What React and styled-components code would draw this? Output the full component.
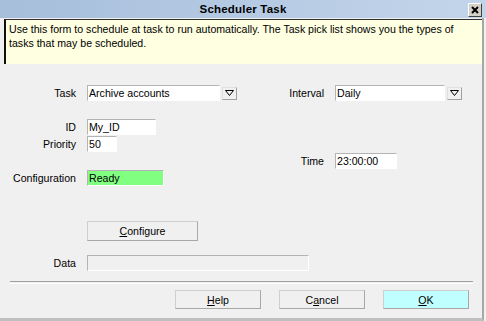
import React from "react";
import styled, { createGlobalStyle } from "styled-components";

const Global = createGlobalStyle`
  html, body {
    margin: 0;
    padding: 0;
    background: #f0f0f0;
  }
  body {
    font-family: "Liberation Sans", Arial, sans-serif;
    font-size: 10.6px;
    color: #000;
  }
`;

const Page = styled.div`
  width: 486px;
  height: 321px;
  display: flex;
  flex-direction: column;
  overflow: hidden;
`;

const TitleBar = styled.div`
  height: 18px;
  display: flex;
  align-items: center;
  justify-content: center;
  position: relative;
  background: linear-gradient(to right, #a6bedb, #c3d5ea);
  font-weight: bold;
  font-size: 11.5px;
  letter-spacing: 0.2px;
`;

const CloseBtn = styled.div`
  position: absolute;
  right: 4px;
  top: 3px;
  width: 12px;
  height: 12px;
  background: #d4d0c8;
  border: 1px solid;
  border-color: #fff #404040 #404040 #fff;
  display: flex;
  align-items: center;
  justify-content: center;
`;

const Frame = styled.div`
  width: 482px;
  height: 300px;
  border-right: 2px solid #a8a8a8;
  border-bottom: 3px solid #c0c0c0;
  display: flex;
  flex-direction: column;
`;

const Notice = styled.div`
  margin: 1px 0 0 4px;
  height: 45px;
  box-sizing: border-box;
  background: #ffffe1;
  border-top: 1px solid #303030;
  border-left: 2px solid #101010;
  padding: 2px 0 0 3px;
  line-height: 14px;
`;

const Columns = styled.div`
  display: flex;
  margin-top: 21px;
`;

const Col = styled.div`
  display: flex;
  flex-direction: column;
  width: ${(p) => p.$width}px;
`;

const Row = styled.div`
  display: flex;
  align-items: center;
  height: 16px;
  margin-top: ${(p) => p.$top || 0}px;
`;

const Label = styled.div`
  width: ${(p) => p.$width || 76}px;
  text-align: right;
  margin-right: 11px;
  flex-shrink: 0;
`;

const Field = styled.div`
  width: ${(p) => p.$width}px;
  height: 16px;
  box-sizing: border-box;
  background: ${(p) => p.$bg || "#fff"};
  border-top: 1px solid #b4b4b4;
  border-left: 1px solid #b4b4b4;
  border-bottom: 1px solid #fff;
  border-right: 1px solid #fff;
  padding-left: 1px;
  line-height: 14px;
  white-space: nowrap;
  overflow: hidden;
`;

const DropBtn = styled.div`
  width: 15px;
  height: 13px;
  box-sizing: border-box;
  margin-left: 2px;
  border: 1px solid;
  border-color: #e0e0e0 #a0a0a0 #a0a0a0 #e0e0e0;
  background: #f0f0f0;
  display: flex;
  align-items: center;
  justify-content: center;
`;

const Button = styled.div`
  width: ${(p) => p.$width}px;
  height: ${(p) => p.$height}px;
  box-sizing: border-box;
  border: 1px solid;
  border-color: #cfcfcf #a8a8a8 #a8a8a8 #cfcfcf;
  background: ${(p) => p.$bg || "#f0f0f0"};
  display: flex;
  align-items: center;
  justify-content: center;
`;

const ConfigRow = styled.div`
  margin: 35px 0 0 87px;
`;

const Separator = styled.div`
  margin: 10px 0 0 10px;
  width: 463px;
  height: 1px;
  border-top: 1px solid #a0a0a0;
  border-bottom: 1px solid #fff;
`;

const ButtonBar = styled.div`
  display: flex;
  gap: 18px;
  margin: 6px 0 0 175px;
`;

const Arrow = () => (
  <svg width="9" height="6" viewBox="0 0 9 6">
    <path d="M0.5 0.5 H8.5 L4.5 5.5 Z" fill="none" stroke="#000" strokeWidth="1" />
  </svg>
);

const Combo = ({ width, value }) => (
  <>
    <Field $width={width}>{value}</Field>
    <DropBtn>
      <Arrow />
    </DropBtn>
  </>
);

export default function App() {
  return (
    <Page>
      <Global />
      <TitleBar>
        Scheduler Task
        <CloseBtn>
          <svg width="8" height="8" viewBox="0 0 8 8">
            <path d="M1 1 L7 7 M7 1 L1 7" stroke="#000" strokeWidth="2" />
          </svg>
        </CloseBtn>
      </TitleBar>
      <Frame>
        <Notice>
          Use this form to schedule at task to run automatically. The Task pick list shows you the types of
          <br />
          tasks that may be scheduled.
        </Notice>
        <Columns>
          <Col $width={240}>
            <Row>
              <Label>Task</Label>
              <Combo width={133} value="Archive accounts" />
            </Row>
            <Row $top={18}>
              <Label>ID</Label>
              <Field $width={69}>My_ID</Field>
            </Row>
            <Row $top={1}>
              <Label>Priority</Label>
              <Field $width={30}>50</Field>
            </Row>
            <Row $top={18}>
              <Label>Configuration</Label>
              <Field $width={77} $bg="#80ff80">Ready</Field>
            </Row>
          </Col>
          <Col $width={242}>
            <Row>
              <Label $width={84}>Interval</Label>
              <Combo width={110} value="Daily" />
            </Row>
            <Row $top={52}>
              <Label $width={84}>Time</Label>
              <Field $width={62}>23:00:00</Field>
            </Row>
          </Col>
        </Columns>
        <ConfigRow>
          <Button $width={111} $height={20}>
            <span>
              <u>C</u>onfigure
            </span>
          </Button>
        </ConfigRow>
        <Row $top={14}>
          <Label>Data</Label>
          <Field $width={222} $bg="#f0f0f0" />
        </Row>
        <Separator />
        <ButtonBar>
          <Button $width={86} $height={19}>
            <span>
              <u>H</u>elp
            </span>
          </Button>
          <Button $width={86} $height={19}>
            <span>
              C<u>a</u>ncel
            </span>
          </Button>
          <Button $width={86} $height={19} $bg="#c0ffff">
            <span>
              <u>O</u>K
            </span>
          </Button>
        </ButtonBar>
      </Frame>
    </Page>
  );
}
